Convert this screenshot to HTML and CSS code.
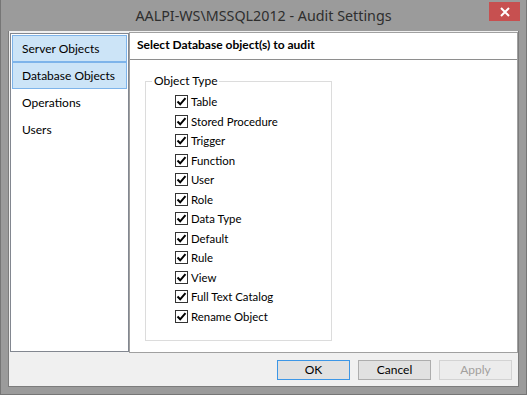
FILE: index.html
```html
<!DOCTYPE html>
<html>
<head>
<meta charset="utf-8">
<link rel="stylesheet" href="styles.css">
</head>
<body>
<div class="window">
  <div class="titlebar">
    <div class="spacer"></div>
    <div class="title">AALPI-WS\MSSQL2012 - Audit Settings</div>
    <div class="tb-right">
      <div class="close">
        <svg width="10" height="10" viewBox="0 0 10 10"><path d="M1 1 L9 9 M9 1 L1 9" stroke="#fff" stroke-width="2" fill="none"/></svg>
      </div>
    </div>
  </div>
  <div class="client">
    <div class="panels">
      <div class="nav">
        <div class="nav-item selected">Server Objects</div>
        <div class="nav-item selected">Database Objects</div>
        <div class="nav-item">Operations</div>
        <div class="nav-item">Users</div>
      </div>
      <div class="main">
        <div class="main-header">Select Database object(s) to audit</div>
        <div class="main-body">
          <fieldset class="group">
            <legend>Object Type</legend>
            <div class="checks">
              <div class="check-row"><span class="cb"><svg width="11" height="11" viewBox="0 0 11 11"><path d="M1.5 5.5 L4.2 8.3 L9.5 2.2" stroke="#000" stroke-width="2" fill="none"/></svg></span><span>Table</span></div>
              <div class="check-row"><span class="cb"><svg width="11" height="11" viewBox="0 0 11 11"><path d="M1.5 5.5 L4.2 8.3 L9.5 2.2" stroke="#000" stroke-width="2" fill="none"/></svg></span><span>Stored Procedure</span></div>
              <div class="check-row"><span class="cb"><svg width="11" height="11" viewBox="0 0 11 11"><path d="M1.5 5.5 L4.2 8.3 L9.5 2.2" stroke="#000" stroke-width="2" fill="none"/></svg></span><span>Trigger</span></div>
              <div class="check-row"><span class="cb"><svg width="11" height="11" viewBox="0 0 11 11"><path d="M1.5 5.5 L4.2 8.3 L9.5 2.2" stroke="#000" stroke-width="2" fill="none"/></svg></span><span>Function</span></div>
              <div class="check-row"><span class="cb"><svg width="11" height="11" viewBox="0 0 11 11"><path d="M1.5 5.5 L4.2 8.3 L9.5 2.2" stroke="#000" stroke-width="2" fill="none"/></svg></span><span>User</span></div>
              <div class="check-row"><span class="cb"><svg width="11" height="11" viewBox="0 0 11 11"><path d="M1.5 5.5 L4.2 8.3 L9.5 2.2" stroke="#000" stroke-width="2" fill="none"/></svg></span><span>Role</span></div>
              <div class="check-row"><span class="cb"><svg width="11" height="11" viewBox="0 0 11 11"><path d="M1.5 5.5 L4.2 8.3 L9.5 2.2" stroke="#000" stroke-width="2" fill="none"/></svg></span><span>Data Type</span></div>
              <div class="check-row"><span class="cb"><svg width="11" height="11" viewBox="0 0 11 11"><path d="M1.5 5.5 L4.2 8.3 L9.5 2.2" stroke="#000" stroke-width="2" fill="none"/></svg></span><span>Default</span></div>
              <div class="check-row"><span class="cb"><svg width="11" height="11" viewBox="0 0 11 11"><path d="M1.5 5.5 L4.2 8.3 L9.5 2.2" stroke="#000" stroke-width="2" fill="none"/></svg></span><span>Rule</span></div>
              <div class="check-row"><span class="cb"><svg width="11" height="11" viewBox="0 0 11 11"><path d="M1.5 5.5 L4.2 8.3 L9.5 2.2" stroke="#000" stroke-width="2" fill="none"/></svg></span><span>View</span></div>
              <div class="check-row"><span class="cb"><svg width="11" height="11" viewBox="0 0 11 11"><path d="M1.5 5.5 L4.2 8.3 L9.5 2.2" stroke="#000" stroke-width="2" fill="none"/></svg></span><span>Full Text Catalog</span></div>
              <div class="check-row"><span class="cb"><svg width="11" height="11" viewBox="0 0 11 11"><path d="M1.5 5.5 L4.2 8.3 L9.5 2.2" stroke="#000" stroke-width="2" fill="none"/></svg></span><span>Rename Object</span></div>
            </div>
          </fieldset>
        </div>
      </div>
    </div>
    <div class="footer">
      <div class="btn default">OK</div>
      <div class="btn">Cancel</div>
      <div class="btn disabled">Apply</div>
    </div>
  </div>
</div>
</body>
</html>
```

FILE: styles.css
```css
* { box-sizing: border-box; }
html, body { margin: 0; padding: 0; }
body {
  width: 527px;
  height: 395px;
  overflow: hidden;
  background: #9b9b9b;
  font-family: Lato, "Noto Sans", sans-serif;
  font-size: 12px;
  color: #000;
}
.window {
  width: 527px;
  height: 395px;
  background: #9b9b9b;
  border-left: 1px solid #767676;
  border-right: 1px solid #767676;
  border-bottom: 1px solid #767676;
  padding: 0 7px 7px 7px;
  display: flex;
  flex-direction: column;
}
.titlebar {
  height: 31px;
  display: grid;
  grid-template-columns: 1fr auto 1fr;
  align-items: start;
}
.title {
  font-family: "Noto Sans", sans-serif;
  font-size: 14.3px;
  color: #2e2e2e;
  line-height: 20px;
  padding-top: 6px;
  white-space: nowrap;
}
.tb-right {
  display: flex;
  justify-content: flex-end;
  margin-right: -1px;
}
.close {
  margin-top: 2px;
  width: 31px;
  height: 19px;
  background: #c75050;
  display: flex;
  align-items: center;
  justify-content: center;
}
.client {
  flex: 1;
  background: #f0f0f0;
  border: 1px solid #7c7c7c;
  border-top: none;
  display: flex;
  flex-direction: column;
  padding: 1px 0 0 1px;
}
.panels {
  display: flex;
  height: 321px;
}
.nav {
  width: 119px;
  margin-top: 1px;
  height: 319px;
  background: #fff;
  border: 1px solid #828790;
  padding: 1px;
}
.nav-item {
  height: 27px;
  line-height: 25px;
  padding-left: 9px;
  border: 1px solid transparent;
  white-space: nowrap;
}
.nav-item.selected {
  background: #cce4f7;
  border-color: #7eb4ea;
}
.main {
  flex: 1;
  background: #fff;
  border: 1px solid #a0a0a0;
  display: flex;
  flex-direction: column;
}
.main-header {
  height: 27px;
  border-bottom: 1px solid #8e8e8e;
  font-weight: bold;
  padding-left: 7px;
  line-height: 24px;
}
.main-body {
  padding: 13px 0 0 15px;
}
.group {
  width: 187px;
  height: 268px;
  margin: 0;
  border: 1px solid #dcdcdc;
  padding: 3px 0 0 0;
}
.group legend {
  padding: 0 2px;
  margin-left: 6px;
  line-height: 16px;
}
.checks {
  padding-left: 29px;
  font-size: 11.4px;
}
.check-row {
  height: 19.5px;
  display: flex;
  align-items: center;
  gap: 3px;
  white-space: nowrap;
}
.cb {
  width: 13px;
  height: 13px;
  border: 1px solid #333;
  background: #fff;
  display: flex;
  align-items: center;
  justify-content: center;
}
.footer {
  flex: 1;
  display: flex;
  justify-content: flex-end;
  align-items: flex-start;
  gap: 8px;
  padding: 7px 6px 0 0;
}
.btn {
  width: 73px;
  height: 20px;
  background: #e1e1e1;
  border: 1px solid #adadad;
  text-align: center;
  line-height: 18px;
}
.btn.default {
  border-color: #3c96e6;
}
.btn.disabled {
  background: #ececec;
  border-color: #d3d3d3;
  color: #a3a09d;
}
```
